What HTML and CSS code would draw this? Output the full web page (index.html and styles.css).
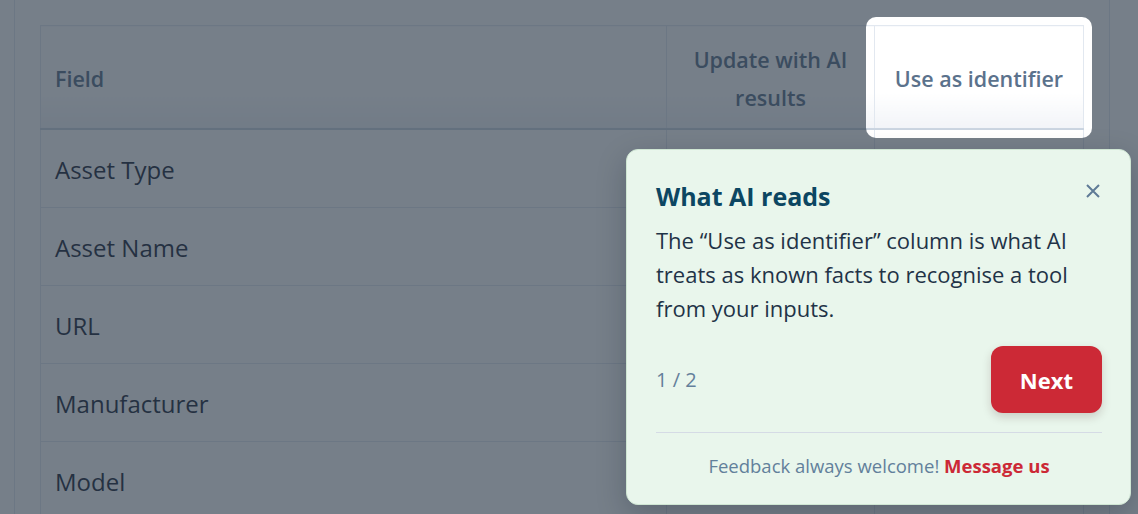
FILE: index.html
```html
<!DOCTYPE html>
<html lang="en">
<head>
<meta charset="utf-8">
<title>Fields – AI tour</title>
<link rel="stylesheet" href="styles.css">
</head>
<body>
<div class="card">
  <table class="fields">
    <colgroup>
      <col class="col-field">
      <col class="col-update">
      <col class="col-id">
    </colgroup>
    <thead>
      <tr>
        <th class="th-left">Field</th>
        <th>Update with AI results</th>
        <th>Use as identifier</th>
      </tr>
    </thead>
    <tbody>
      <tr><td>Asset Type</td><td></td><td></td></tr>
      <tr><td>Asset Name</td><td></td><td></td></tr>
      <tr><td>URL</td><td></td><td></td></tr>
      <tr><td>Manufacturer</td><td></td><td></td></tr>
      <tr><td>Model</td><td></td><td></td></tr>
    </tbody>
  </table>
</div>

<div class="spotlight"></div>

<div class="tour-popover" role="dialog" aria-labelledby="tour-title">
  <div class="pop-head">
    <h2 id="tour-title" class="pop-title">What AI reads</h2>
    <button class="pop-close" aria-label="Close">
      <svg width="14" height="14" viewBox="0 0 14 14"><path d="M1 1 L13 13 M13 1 L1 13" stroke="currentColor" stroke-width="2" fill="none"/></svg>
    </button>
  </div>
  <p class="pop-body">The “Use as identifier” column is what AI treats as known facts to recognise a tool from your inputs.</p>
  <div class="pop-actions">
    <span class="pop-step">1 / 2</span>
    <button class="pop-next">Next</button>
  </div>
  <hr class="pop-divider">
  <div class="pop-foot">Feedback always welcome! <a href="#">Message us</a></div>
</div>
</body>
</html>
```

FILE: styles.css
```css
html, body {
  margin: 0;
  height: 100%;
  overflow: hidden;
  background: #ffffff;
  font-family: "Open Sans", "Noto Sans", sans-serif;
}

.card {
  margin-left: 14px;
  width: 1096px;
  box-sizing: border-box;
  border-left: 1px solid #e2e8f0;
  border-right: 1px solid #e2e8f0;
  padding: 25px 25px 0;
  min-height: 700px;
  background: #ffffff;
}

.fields {
  width: 100%;
  border-collapse: collapse;
  table-layout: fixed;
}

.col-field { width: 626px; }
.col-update { width: 208px; }

.fields th {
  font-size: 21.5px;
  font-weight: 600;
  color: #5b728c;
  line-height: 38px;
  padding: 15px 14px 11px;
  text-align: center;
  vertical-align: middle;
  border: 1px solid #e2e8f0;
  border-bottom: 2px solid #cbd5e1;
  background: linear-gradient(to bottom, #ffffff 65%, #f2f4f8 100%);
}

.fields th.th-left { text-align: left; }

.fields td {
  font-size: 24px;
  color: #1e293b;
  height: 75px;
  padding: 2px 14px 0;
  border: 1px solid #e2e8f0;
  vertical-align: middle;
}

.spotlight {
  position: absolute;
  left: 866px;
  top: 17px;
  width: 226px;
  height: 121px;
  border-radius: 10px;
  box-shadow: 0 0 0 3000px rgba(40, 55, 70, 0.64);
  pointer-events: none;
}

.tour-popover {
  position: absolute;
  left: 626px;
  top: 149px;
  width: 505px;
  box-sizing: border-box;
  padding: 30px 28px 23px 29px;
  background: #e9f6ec;
  border: 1px solid #cfe6d3;
  border-radius: 12px;
  box-shadow: 0 10px 30px rgba(10, 20, 30, 0.22);
}

.pop-head {
  display: flex;
  justify-content: space-between;
  align-items: flex-start;
}

.pop-title {
  margin: 0;
  font-size: 25px;
  line-height: 32px;
  font-weight: 700;
  color: #0c4662;
}

.pop-close {
  width: 14px;
  height: 14px;
  margin: 4px 2px 0 0;
  padding: 0;
  border: 0;
  background: none;
  color: #5f7b96;
  cursor: pointer;
}

.pop-close svg { display: block; }

.pop-body {
  margin: 11px 0 0;
  font-size: 22px;
  line-height: 34px;
  color: #1f3347;
}

.pop-actions {
  display: flex;
  justify-content: space-between;
  align-items: center;
  margin-top: 21px;
}

.pop-step {
  font-size: 20px;
  color: #64809b;
}

.pop-next {
  height: 67px;
  padding: 0 29px;
  border: 0;
  border-radius: 12px;
  background: #cc2936;
  color: #ffffff;
  font-family: inherit;
  font-size: 22px;
  font-weight: 700;
  box-shadow: 0 4px 10px rgba(60, 20, 20, 0.18);
  cursor: pointer;
}

.pop-divider {
  margin: 19px 0 0;
  border: 0;
  border-top: 1px solid #d5dbe5;
}

.pop-foot {
  margin-top: 18px;
  text-align: center;
  font-size: 18.5px;
  line-height: 30px;
  color: #62809b;
}

.pop-foot a {
  color: #cc2936;
  font-weight: 700;
  text-decoration: none;
}
```
